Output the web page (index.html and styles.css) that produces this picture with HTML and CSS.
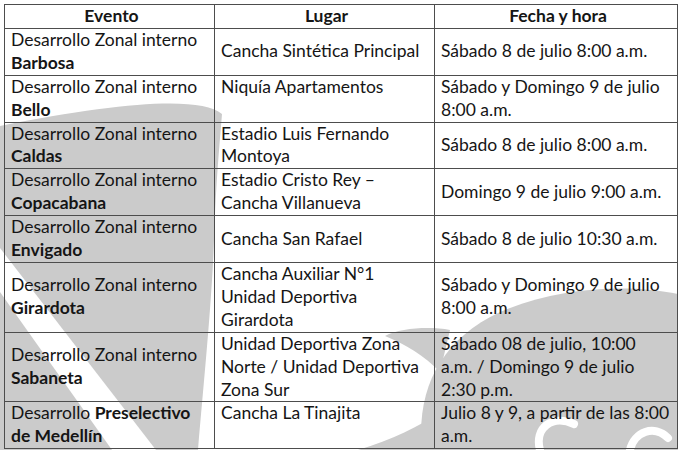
FILE: index.html
```html
<!DOCTYPE html>
<html lang="es">
<head>
<meta charset="utf-8">
<link rel="stylesheet" href="styles.css">
</head>
<body>
<div class="page">
  <svg class="watermark" viewBox="0 0 678 450" width="678" height="450" aria-hidden="true">
    <path class="wm" d="M222 114 C200 96 120 102 0 126 L0 450 L198 450 C204 380 212 300 214 240 C216 180 220 140 222 114 Z"/>
    <path class="wm-cut" d="M0 248 L0 292 L112 450 L156 450 Z"/>
    <path class="wm" d="M422 450 C416 390 440 340 500 312 C560 286 630 284 678 294 L678 450 Z"/>
    <path class="wm" d="M450 330 C430 326 400 328 385 336 C405 344 425 356 440 372 Z"/>
    <path class="wm" d="M440 412 C420 426 392 440 358 450 L440 450 Z"/>
    <path class="wm-line" d="M540 450 C534 428 552 414 574 424"/>
    <path class="wm-line" d="M630 450 C634 432 654 424 668 438"/>
  </svg>
  <table class="schedule">
    <colgroup>
      <col class="c1"><col class="c2"><col class="c3">
    </colgroup>
    <thead>
      <tr><th>Evento</th><th>Lugar</th><th>Fecha y hora</th></tr>
    </thead>
    <tbody>
      <tr>
        <td>Desarrollo Zonal interno<br><b>Barbosa</b></td>
        <td>Cancha Sintética Principal</td>
        <td>Sábado 8 de julio 8:00 a.m.</td>
      </tr>
      <tr>
        <td>Desarrollo Zonal interno<br><b>Bello</b></td>
        <td class="top">Niquía Apartamentos</td>
        <td>Sábado y Domingo 9 de julio<br>8:00 a.m.</td>
      </tr>
      <tr>
        <td>Desarrollo Zonal interno<br><b>Caldas</b></td>
        <td>Estadio Luis Fernando<br>Montoya</td>
        <td>Sábado 8 de julio 8:00 a.m.</td>
      </tr>
      <tr>
        <td>Desarrollo Zonal interno<br><b>Copacabana</b></td>
        <td>Estadio Cristo Rey –<br>Cancha Villanueva</td>
        <td>Domingo 9 de julio 9:00 a.m.</td>
      </tr>
      <tr>
        <td>Desarrollo Zonal interno<br><b>Envigado</b></td>
        <td>Cancha San Rafael</td>
        <td>Sábado 8 de julio 10:30 a.m.</td>
      </tr>
      <tr>
        <td>Desarrollo Zonal interno<br><b>Girardota</b></td>
        <td>Cancha Auxiliar N°1<br>Unidad Deportiva<br>Girardota</td>
        <td>Sábado y Domingo 9 de julio<br>8:00 a.m.</td>
      </tr>
      <tr>
        <td>Desarrollo Zonal interno<br><b>Sabaneta</b></td>
        <td>Unidad Deportiva Zona<br>Norte / Unidad Deportiva<br>Zona Sur</td>
        <td>Sábado 08 de julio, 10:00<br>a.m. / Domingo 9 de julio<br>2:30 p.m.</td>
      </tr>
      <tr>
        <td>Desarrollo <b>Preselectivo</b><br><b>de Medellín</b></td>
        <td class="top">Cancha La Tinajita</td>
        <td>Julio 8 y 9, a partir de las 8:00<br>a.m.</td>
      </tr>
    </tbody>
  </table>
</div>
</body>
</html>
```
FILE: styles.css
```css
html, body {
  margin: 0;
  padding: 0;
  background: #ffffff;
}
.page {
  position: relative;
  width: 678px;
  height: 450px;
  overflow: hidden;
  padding: 4px 0 0 4px;
  box-sizing: border-box;
}
.watermark {
  position: absolute;
  left: 0;
  top: 0;
  z-index: 0;
}
.wm { fill: #cbcbcb; }
.wm-cut { fill: #ffffff; }
.wm-line { fill: none; stroke: #ffffff; stroke-width: 8; stroke-linecap: round; }
.schedule {
  position: relative;
  z-index: 1;
  border-collapse: collapse;
  table-layout: fixed;
  width: 673px;
  font-family: Lato, "Open Sans", "Liberation Sans", sans-serif;
  font-size: 17.5px;
  line-height: 22.9px;
  color: #151515;
}
.c1 { width: 210px; }
.c2 { width: 220px; }
.c3 { width: 243px; }
.schedule th,
.schedule td {
  border: 1px solid #4d4d4d;
  padding: 0 2px 0 6px;
  vertical-align: middle;
  text-align: left;
  white-space: nowrap;
}
.schedule th {
  text-align: center;
  font-weight: 700;
}
.schedule td.top { vertical-align: top; }
.schedule b { font-weight: 700; }
```
